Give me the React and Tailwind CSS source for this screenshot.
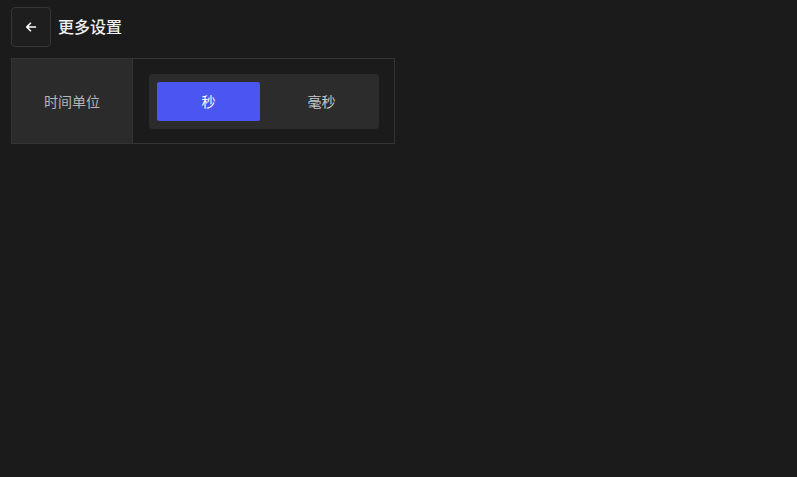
export default function App() {
  return (
    <div
      className="w-[797px] h-[477px] bg-[#1b1b1b] overflow-hidden"
      style={{ fontFamily: '"Noto Sans", "Noto Sans CJK SC", sans-serif' }}
    >
      <div className="pl-[11px] pt-[7px] flex items-center gap-[7px]">
        <button className="w-[40px] h-[40px] rounded-[4px] border border-[#363636] bg-[#1e1e1e] flex items-center justify-center text-white">
          <svg width="12" height="12" viewBox="0 0 12 12" fill="none" stroke="currentColor" strokeWidth="1.6" strokeLinecap="round" strokeLinejoin="round">
            <path d="M10.5 6H1.8M5.5 2.2L1.7 6l3.8 3.8" />
          </svg>
        </button>
        <span className="text-[16px] font-medium text-[#f0f0f0] leading-none">更多设置</span>
      </div>
      <div className="ml-[11px] mt-[11px] w-[384px] h-[86px] border border-[#343434] flex">
        <div className="w-[121px] bg-[#2b2b2b] border-r border-[#343434] flex items-center justify-center text-[14px] text-[#b5b5b5]">
          时间单位
        </div>
        <div className="flex-1 pl-[16px] flex items-center">
          <div className="w-[230px] h-[55px] rounded-[4px] bg-[#2c2c2c] p-[8px] flex">
            <div className="w-[103px] h-[39px] rounded-[2px] bg-[#4b56f2] flex items-center justify-center text-[14px] text-white">
              秒
            </div>
            <div className="flex-1 h-[39px] pl-[12px] flex items-center justify-center text-[14px] text-[#c8c8c8]">
              毫秒
            </div>
          </div>
        </div>
      </div>
    </div>
  );
}
